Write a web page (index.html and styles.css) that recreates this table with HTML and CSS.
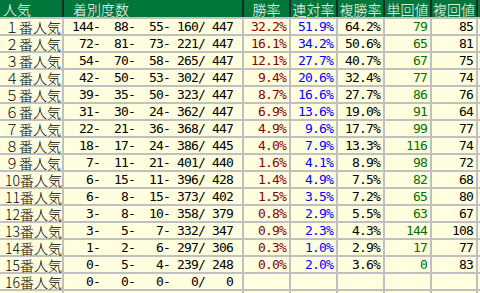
FILE: index.html
```html
<!DOCTYPE html>
<html lang="ja">
<head>
<meta charset="utf-8">
<link rel="stylesheet" href="styles.css">
</head>
<body>
<div class="tbl">
  <div class="row head">
    <div class="h first">人気</div><div class="h cnt">着別度数</div><div class="h">勝率</div><div class="h">連対率</div><div class="h">複勝率</div><div class="h">単回値</div><div class="h">複回値</div><div class="h"></div>
  </div>
  <div class="row"><div class="lbl">１番人気</div><div class="cnt">144-  88-  55- 160/ 447</div><div class="num win">32.2%</div><div class="num ren">51.9%</div><div class="num">64.2%</div><div class="num tan">79</div><div class="num">85</div><div></div></div>
  <div class="row"><div class="lbl">２番人気</div><div class="cnt"> 72-  81-  73- 221/ 447</div><div class="num win">16.1%</div><div class="num ren">34.2%</div><div class="num">50.6%</div><div class="num tan">65</div><div class="num">81</div><div></div></div>
  <div class="row"><div class="lbl">３番人気</div><div class="cnt"> 54-  70-  58- 265/ 447</div><div class="num win">12.1%</div><div class="num ren">27.7%</div><div class="num">40.7%</div><div class="num tan">67</div><div class="num">75</div><div></div></div>
  <div class="row"><div class="lbl">４番人気</div><div class="cnt"> 42-  50-  53- 302/ 447</div><div class="num win">9.4%</div><div class="num ren">20.6%</div><div class="num">32.4%</div><div class="num tan">77</div><div class="num">74</div><div></div></div>
  <div class="row"><div class="lbl">５番人気</div><div class="cnt"> 39-  35-  50- 323/ 447</div><div class="num win">8.7%</div><div class="num ren">16.6%</div><div class="num">27.7%</div><div class="num tan">86</div><div class="num">76</div><div></div></div>
  <div class="row"><div class="lbl">６番人気</div><div class="cnt"> 31-  30-  24- 362/ 447</div><div class="num win">6.9%</div><div class="num ren">13.6%</div><div class="num">19.0%</div><div class="num tan">91</div><div class="num">64</div><div></div></div>
  <div class="row"><div class="lbl">７番人気</div><div class="cnt"> 22-  21-  36- 368/ 447</div><div class="num win">4.9%</div><div class="num ren">9.6%</div><div class="num">17.7%</div><div class="num tan">99</div><div class="num">77</div><div></div></div>
  <div class="row"><div class="lbl">８番人気</div><div class="cnt"> 18-  17-  24- 386/ 445</div><div class="num win">4.0%</div><div class="num ren">7.9%</div><div class="num">13.3%</div><div class="num tan">116</div><div class="num">74</div><div></div></div>
  <div class="row"><div class="lbl">９番人気</div><div class="cnt">  7-  11-  21- 401/ 440</div><div class="num win">1.6%</div><div class="num ren">4.1%</div><div class="num">8.9%</div><div class="num tan">98</div><div class="num">72</div><div></div></div>
  <div class="row"><div class="lbl">10番人気</div><div class="cnt">  6-  15-  11- 396/ 428</div><div class="num win">1.4%</div><div class="num ren">4.9%</div><div class="num">7.5%</div><div class="num tan">82</div><div class="num">68</div><div></div></div>
  <div class="row"><div class="lbl">11番人気</div><div class="cnt">  6-   8-  15- 373/ 402</div><div class="num win">1.5%</div><div class="num ren">3.5%</div><div class="num">7.2%</div><div class="num tan">65</div><div class="num">80</div><div></div></div>
  <div class="row"><div class="lbl">12番人気</div><div class="cnt">  3-   8-  10- 358/ 379</div><div class="num win">0.8%</div><div class="num ren">2.9%</div><div class="num">5.5%</div><div class="num tan">63</div><div class="num">67</div><div></div></div>
  <div class="row"><div class="lbl">13番人気</div><div class="cnt">  3-   5-   7- 332/ 347</div><div class="num win">0.9%</div><div class="num ren">2.3%</div><div class="num">4.3%</div><div class="num tan">144</div><div class="num">108</div><div></div></div>
  <div class="row"><div class="lbl">14番人気</div><div class="cnt">  1-   2-   6- 297/ 306</div><div class="num win">0.3%</div><div class="num ren">1.0%</div><div class="num">2.9%</div><div class="num tan">17</div><div class="num">77</div><div></div></div>
  <div class="row"><div class="lbl">15番人気</div><div class="cnt">  0-   5-   4- 239/ 248</div><div class="num win">0.0%</div><div class="num ren">2.0%</div><div class="num">3.6%</div><div class="num tan">0</div><div class="num">83</div><div></div></div>
  <div class="row"><div class="lbl">16番人気</div><div class="cnt">  0-   0-   0-   0/   0</div><div></div><div></div><div></div><div></div><div></div><div></div></div>
  <div class="row"><div></div><div></div><div></div><div></div><div></div><div></div><div></div><div></div></div>
</div>
</body>
</html>
```

FILE: styles.css
```css
html, body {
  margin: 0;
  padding: 0;
  overflow: hidden;
  background: #ffffff;
}

.tbl {
  display: flex;
  flex-direction: column;
  gap: 2px;
  width: 520px;
  background: #c0c0c0;
}

.row {
  display: grid;
  grid-template-columns: 62px 178px 45px 45px 45px 45px 44px 40px;
  column-gap: 2px;
  height: 15px;
}

.row > div {
  background: #ffffe0;
  color: #000;
  box-sizing: border-box;
  height: 15px;
  padding-top: 1px;
  line-height: 14px;
  white-space: pre;
  font-family: "DejaVu Sans Mono", monospace;
  font-size: 13px;
  letter-spacing: -0.83px;
}

.row.head {
  height: 17px;
  background: #1f2a22;
}

.row.head > .h {
  background: #00773a;
  color: #ffffff;
  height: 17px;
  padding-top: 1px;
  line-height: 16px;
  font-family: "Noto Sans CJK JP", sans-serif;
  font-weight: 300;
  font-size: 14px;
  letter-spacing: 0;
  text-align: center;
}

.row.head > .h.first {
  text-align: left;
  padding-left: 3px;
}

.row.head > .h.cnt {
  text-align: left;
  padding-left: 9px;
}

.row > .lbl {
  font-family: "Noto Sans CJK JP", sans-serif;
  font-weight: 300;
  font-size: 14px;
  letter-spacing: 0;
  padding-left: 5px;
}

.row > .cnt {
  padding-left: 8px;
}

.row > .num {
  text-align: right;
  padding-right: 3px;
}

.row > .win { color: #8b0000; }
.row > .ren { color: #0000ff; }
.row > .tan { color: #007000; }
```
